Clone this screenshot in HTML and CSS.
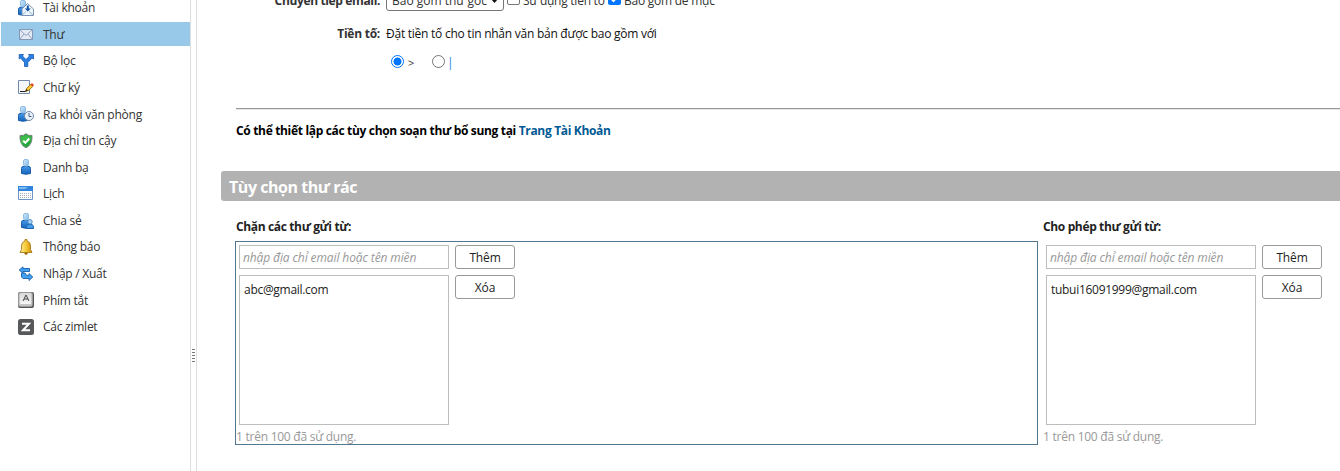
FILE: index.html
```html
<!DOCTYPE html>
<html lang="vi">
<head>
<meta charset="utf-8">
<title>Tùy chọn thư</title>
<link rel="stylesheet" href="styles.css">
</head>
<body>
<svg class="defs" aria-hidden="true">
  <defs>
    <linearGradient id="head" x1="0" y1="0" x2="1" y2="1"><stop offset="0" stop-color="#d7ecfb"/><stop offset="1" stop-color="#7db5e2"/></linearGradient>
    <linearGradient id="body" x1="0" y1="0" x2="0" y2="1"><stop offset="0" stop-color="#4298ea"/><stop offset="1" stop-color="#1462b6"/></linearGradient>
    <linearGradient id="gold" x1="0" y1="0" x2="1" y2="0"><stop offset="0" stop-color="#ffefa0"/><stop offset=".5" stop-color="#f5ca38"/><stop offset="1" stop-color="#d08c09"/></linearGradient>
    <linearGradient id="key" x1="0" y1="0" x2="0" y2="1"><stop offset="0" stop-color="#d8d8d8"/><stop offset="1" stop-color="#f7f7f7"/></linearGradient>
    <g id="person">
      <path d="M.5 9.500Q.5 7.500 2 7.500H8Q9.500 7.500 9.500 9.500V14.500Q5 16 .5 14.500Z" fill="url(#body)" stroke="#1a5da6"/>
      <rect x="2.500" y=".5" width="5" height="6.500" rx="1.500" fill="url(#head)" stroke="#8dbde6"/>
    </g>
  </defs>
</svg>
<div class="app">
  <nav class="sidebar">
    <a class="item"><svg class="icon" viewBox="0 0 16 16"><use href="#person"/><path d="M4 9 9.500 3.500 15.500 9V15.500H4Z" fill="#edf5fd" stroke="#7893b4"/><path d="M4 15 8 11.500M15 15 11 11.500" fill="none" stroke="#9db4d0"/><path d="M8.800 5.500H10.800V8.500H12.800L9.800 11.500 6.800 8.500H8.800Z" fill="#1554a5"/></svg><span>Tài khoản</span></a>
    <a class="item selected"><svg class="icon" viewBox="0 0 16 16"><path d="M1.500 3.500H14.500V13.500H1.500Z" fill="#e3eaf4" stroke="#8399b5"/><path d="M2 4 8 9.500 14 4M2 13 6 8M14 13 10 8" fill="none" stroke="#8fa3bf"/></svg><span>Thư</span></a>
    <a class="item"><svg class="icon" viewBox="0 0 16 16"><path d="M1.200 1.500H5.500L4.500 3 8 6.500 11.500 3 10.500 1.500H15.500V6L14 5 9.800 9.500V13.500H6.500V9.500L2.500 5 1.200 6Z" fill="#2b7fe0" stroke="#175cb3" stroke-width=".8"/></svg><span>Bộ lọc</span></a>
    <a class="item"><svg class="icon" viewBox="0 0 16 16"><path d="M.5 .5H11.500V13.500H.5Z" fill="#f3f7fc" stroke="#7489a7"/><path d="M2 11.500H8" stroke="#222"/><path d="M7.500 11.500 8.500 8.500 12.500 4.500 14.800 6.500 10.500 10.500Z" fill="#f8c72d" stroke="#8a6008" stroke-width=".8"/><path d="M12.500 4.500 14 3 16 5 14.800 6.500Z" fill="#dd492d"/><path d="M7.500 11.500 8.500 9 10 10.500Z" fill="#222"/></svg><span>Chữ ký</span></a>
    <a class="item"><svg class="icon" viewBox="0 0 16 16"><use href="#person"/><circle cx="11" cy="10" r="4.500" fill="#e9f2fb" stroke="#7188a5"/><path d="M11 7V10.500H13.500" fill="none" stroke="#446284"/></svg><span>Ra khỏi văn phòng</span></a>
    <a class="item"><svg class="icon" viewBox="0 0 16 16"><path d="M8 .7Q10 3 14 2.500Q14.500 12 8 14.800Q1.500 12 2 2.500Q6 3 8 .7Z" fill="#22a83a" stroke="#71877a"/><path d="M8 2Q10 4 13 3.500L12.500 8 3 11Q2.500 8 3 3.500Q6 4 8 2Z" fill="#58cb5d" opacity=".55"/><path d="M5.200 7.800 7.400 9.800 11.200 5.500" fill="none" stroke="#fff" stroke-width="2"/></svg><span>Địa chỉ tin cậy</span></a>
    <a class="item"><svg class="icon" viewBox="0 0 16 16"><use href="#person" x="3"/></svg><span>Danh bạ</span></a>
    <a class="item"><svg class="icon" viewBox="0 0 16 16"><path d="M.5 .5H14.500V13.500H.5Z" fill="#fbfcfe" stroke="#6d95c4"/><path d="M0 0H15V5H0Z" fill="#3285dc"/><path d="M1 1H10L7 3H1Z" fill="#82bbef"/><path d="M2 7.500H13M2 9.500H13M2 11.500H13" stroke="#a5afbc" stroke-dasharray="1 1"/></svg><span>Lịch</span></a>
    <a class="item"><svg class="icon" viewBox="0 0 16 16"><use href="#person" x="3"/><path d="M8.500 13.500Q9 11 12 11Q15 11 15.500 13.500V15.500H8.500Z" fill="#449bea" stroke="#1b65af"/><circle cx="12" cy="8.800" r="2.200" fill="#aed7f7" stroke="#4788c4"/></svg><span>Chia sẻ</span></a>
    <a class="item"><svg class="icon" viewBox="0 0 16 16"><circle cx="8" cy="14.300" r="1.500" fill="#9a6511"/><path d="M7 2V.5H9V2Q12.500 3 12.500 7V10.500L14 13.500H2L3.500 10.500V7Q3.500 3 7 2Z" fill="url(#gold)" stroke="#a97914" stroke-width=".9"/></svg><span>Thông báo</span></a>
    <a class="item"><svg class="icon" viewBox="0 0 16 16"><path d="M1.200 4 5 .8V2.500H11.500V5.500H5V7.300Z" fill="#42a0f0" stroke="#1861aa" stroke-width=".9"/><path d="M14.800 11 11 7.500V9.300H8.500L7 7H3.500V11L5 12.500H11V14.500Z" fill="#42a0f0" stroke="#1861aa" stroke-width=".9"/></svg><span>Nhập / Xuất</span></a>
    <a class="item"><svg class="icon" viewBox="0 0 16 16"><rect width="16" height="16" rx="2" fill="#555"/><rect x=".5" y=".5" width="14" height="14" rx="2" fill="#c5c5c5" stroke="#999"/><rect x="2" y="1" width="11" height="11" rx="1" fill="url(#key)"/><path d="M5 9 8 3 11 9M6 7H10" fill="none" stroke="#444"/></svg><span>Phím tắt</span></a>
    <a class="item"><svg class="icon" viewBox="0 0 16 16"><rect width="16" height="16" rx="2.500" fill="#57585a"/><path d="M4 4.800H11L5 11.200H12" fill="none" stroke="#fff" stroke-width="2"/></svg><span>Các zimlet</span></a>
  </nav>
  <div class="sash"><div class="grip"></div></div>
  <main class="main">
    <div class="row forward">
      <div class="label">Chuyển tiếp email:</div>
      <div class="select"><span>Bao gồm thư gốc</span><svg class="caret" viewBox="0 0 7 4"><path d="M0 0H7L3.500 4Z"/></svg></div>
      <span class="check"></span><span class="check-text prefix-text">Sử dụng tiền tố</span>
      <span class="check on"><svg viewBox="0 0 13 13"><path d="M3 6.500 5.500 9 10 4" fill="none" stroke="#fff" stroke-width="2"/></svg></span><span class="check-text">Bao gồm đề mục</span>
    </div>
    <div class="row prefix"><div class="label">Tiền tố:</div><div class="desc">Đặt tiền tố cho tin nhắn văn bản được bao gồm với</div></div>
    <div class="row radios"><span class="radio on"></span><span class="mark">&gt;</span><span class="radio"></span><span class="bar">|</span></div>
    <div class="rule"></div>
    <p class="note">Có thể thiết lập các tùy chọn soạn thư bổ sung tại <a>Trang Tài Khoản</a></p>
    <h2 class="title"><span>Tùy chọn thư rác</span></h2>
    <div class="lists">
      <section class="block">
        <h3>Chặn các thư gửi từ:</h3>
        <div class="panel focused">
          <div class="controls"><input class="field" placeholder="nhập địa chỉ email hoặc tên miền"><button class="btn">Thêm</button><div class="listbox">abc@gmail.com</div><button class="btn">Xóa</button></div>
          <div class="used">1 trên 100 đã sử dụng.</div>
        </div>
      </section>
      <section class="allow">
        <h3>Cho phép thư gửi từ:</h3>
        <div class="panel">
          <div class="controls"><input class="field" placeholder="nhập địa chỉ email hoặc tên miền"><button class="btn">Thêm</button><div class="listbox">tubui16091999@gmail.com</div><button class="btn">Xóa</button></div>
          <div class="used">1 trên 100 đã sử dụng.</div>
        </div>
      </section>
    </div>
  </main>
</div>
</body>
</html>
```
FILE: styles.css
```css
* { box-sizing: border-box; }
body { margin: 0; background: #fff; color: #333; font: 12px/20px "Open Sans", "Noto Sans", sans-serif; overflow: hidden; white-space: nowrap; letter-spacing: -0.25px; }
.defs { position: absolute; width: 0; height: 0; }
.app { display: flex; height: 471px; overflow: hidden; }
.sidebar { width: 190px; margin-top: -4.600px; display: flex; flex-direction: column; gap: 2.580px; flex: none; }
.item { display: flex; align-items: center; height: 24px; flex: none; margin-left: 1px; padding-left: 17px; gap: 9px; }
.item span { padding-top: 1.600px; }
.selected { background: #99c9e8; }
.icon { width: 16px; height: 16px; flex: none; margin-top: 1px; }
.sash { width: 7px; border: solid #dedede; border-width: 0 1px; flex: none; padding: 349px 0 0 1px; }
.grip { width: 3px; height: 13px; background: repeating-linear-gradient(#777 0 1px, transparent 1px 3px); }
.main { flex: 1; min-width: 0; overflow: hidden; }
.row { display: flex; align-items: center; }
.label { width: 183px; text-align: right; font-weight: 700; margin-right: 6px; flex: none; }
.forward { height: 24px; margin-top: -13px; }
.forward .label { letter-spacing: -0.36px; }
.forward .label, .check-text, .select span { padding-top: 4px; }
.select { display: flex; align-items: center; justify-content: space-between; width: 118px; height: 24px; border: 1px solid #767676; border-radius: 3px; padding: 0 5px; margin-right: 3px; letter-spacing: 0; flex: none; }
.caret { width: 7px; height: 4px; fill: #111; margin-top: 3px; }
.check { width: 13px; height: 13px; border: 1px solid #767676; border-radius: 2px; background: #fff; margin-top: -2px; flex: none; }
.check.on { border: 0; background: #0075ff; }
.check svg { display: block; }
.check-text { margin-left: 3px; }
.prefix-text { width: 85px; }
.prefix { height: 20px; margin-top: 13px; }
.desc { color: #111; }
.radios { height: 20px; margin-top: 8px; padding-left: 194px; }
.radio { width: 13px; height: 13px; border: 1px solid #767676; border-radius: 50%; flex: none; margin-top: -1px; }
.radio.on { border-color: #0075ff; background: radial-gradient(circle, #0075ff 3.700px, #fff 4.300px); }
.mark { margin-left: 4px; width: 24px; font-size: 11px; padding-top: 1px; }
.bar { margin-left: 2px; color: #1684d8; padding-top: 2px; }
.rule { height: 2px; margin: 36px 0 0 39px; background: #999; border-bottom: 1px solid #e5e5e5; }
.note { margin: 11px 0 0 39px; font-weight: 700; color: #000; letter-spacing: -0.33px; }
.note a { color: #005a95; }
.title { margin: 30px 0 0 24px; height: 30px; border-radius: 3px 0 0 3px; background: #b2b2b2; color: #fff; font-size: 16px; line-height: 33px; padding-left: 8px; letter-spacing: -0.45px; }
.lists { display: flex; padding: 16px 0 0 38px; }
.block { width: 803px; margin-right: 4px; }
h3 { font-size: 12px; line-height: 20px; margin: 0 0 4px 1px; color: #222; letter-spacing: -0.36px; }
.panel { height: 204px; border: 1px solid transparent; }
.focused { border-color: #527891; }
.controls { display: grid; grid-template-columns: 210px 60px; grid-template-rows: 24px 150px; gap: 6px; padding: 3px 0 0 3px; align-items: start; }
.field { width: 210px; height: 24px; border: 1px solid #bdbdbd; outline: 0; padding: 0 0 0 3px; font: italic 12px "Open Sans", "Noto Sans", sans-serif; letter-spacing: -0.11px; }
.field::placeholder { color: #999; opacity: 1; }
.btn { height: 24px; border: 1px solid #999; border-radius: 3px; background: #fff; color: #222; padding: 2px 0 0; font: inherit; line-height: 20px; letter-spacing: -0.15px; }
.listbox { height: 150px; border: 1px solid #bdbdbd; padding: 4px; color: #222; letter-spacing: -0.29px; }
.used { color: #999; line-height: 20px; margin-top: 2px; }
```
